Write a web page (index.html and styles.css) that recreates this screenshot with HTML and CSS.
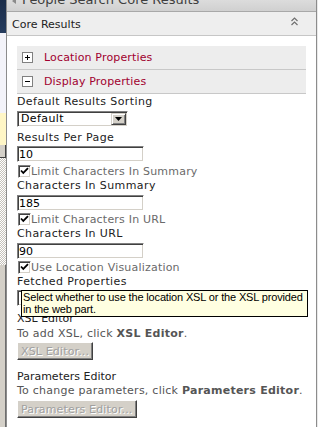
FILE: index.html
```html
<!DOCTYPE html>
<html>
<head>
<meta charset="utf-8">
<link rel="stylesheet" href="styles.css">
</head>
<body>
<div class="page">
  <div class="side">
    <div class="s-navy"></div>
    <div class="s-light"></div>
    <div class="s-yellow"></div>
    <div class="s-btn"></div>
    <div class="s-dither"></div>
    <div class="s-gray"></div>
  </div>
  <div class="panel">
    <div class="titlebar"><span class="tri"></span><span class="title">People Search Core Results</span></div>
    <div class="corehdr">
      <span class="core-t">Core Results</span>
      <svg class="chev" width="7" height="9" viewBox="0 0 7 9"><path d="M0.5 4L3.5 1L6.5 4M0.5 8L3.5 5L6.5 8" fill="none" stroke="#707070" stroke-width="1.2"/></svg>
    </div>
    <div class="content">
      <div class="sect">
        <svg class="box" width="11" height="11" viewBox="0 0 11 11" shape-rendering="crispEdges"><rect x="0.5" y="0.5" width="10" height="10" fill="#fff" stroke="#808080"/><path d="M3 5.5h5M5.5 3v5" stroke="#000"/></svg>
        <span class="sect-t">Location Properties</span>
      </div>
      <div class="sect">
        <svg class="box" width="11" height="11" viewBox="0 0 11 11" shape-rendering="crispEdges"><rect x="0.5" y="0.5" width="10" height="10" fill="#fff" stroke="#808080"/><path d="M3 5.5h5" stroke="#000"/></svg>
        <span class="sect-t">Display Properties</span>
      </div>

      <div class="lbl">Default Results Sorting</div>
      <div class="select"><span class="sel-v">Default</span><span class="sel-btn"><svg width="7" height="4" viewBox="0 0 7 4"><path d="M0 0h7L3.5 4z" fill="#000"/></svg></span></div>

      <div class="lbl lbl-gap">Results Per Page</div>
      <input class="txt" type="text" value="10">

      <div class="chk chk-a"><span class="cb"><svg width="9" height="9" viewBox="0 0 9 9"><path d="M1 3.5l2.3 2.5L8 1.2" fill="none" stroke="#000" stroke-width="1.8"/></svg></span>Limit Characters In Summary</div>
      <div class="lbl">Characters In Summary</div>
      <input class="txt txt-b" type="text" value="185">

      <div class="chk chk-b"><span class="cb"><svg width="9" height="9" viewBox="0 0 9 9"><path d="M1 3.5l2.3 2.5L8 1.2" fill="none" stroke="#000" stroke-width="1.8"/></svg></span>Limit Characters In URL</div>
      <div class="lbl">Characters In URL</div>
      <input class="txt txt-b" type="text" value="90">

      <div class="chk chk-c"><span class="cb"><svg width="9" height="9" viewBox="0 0 9 9"><path d="M1 3.5l2.3 2.5L8 1.2" fill="none" stroke="#000" stroke-width="1.8"/></svg></span>Use Location Visualization</div>
      <div class="lbl">Fetched Properties</div>
      <input class="txt" type="text" value="">

      <div class="sub sub-first">XSL Editor</div>
      <div class="desc desc-a">To add XSL, click <b>XSL Editor</b>.</div>
      <button class="btn btn-a" disabled>XSL Editor...</button>

      <div class="sub sub-second">Parameters Editor</div>
      <div class="desc">To change parameters, click <b>Parameters Editor</b>.</div>
      <button class="btn btn-b" disabled>Parameters Editor...</button>
    </div>
    <div class="tooltip">Select whether to use the location XSL or the XSL provided<br>in the web part.</div>
  </div>
  <div class="rside"></div>
</div>
</body>
</html>
```

FILE: styles.css
```css
* { box-sizing: border-box; }
html, body { margin: 0; padding: 0; }
body { background: #ffffff; font-family: "DejaVu Sans", Verdana, sans-serif; }

.page { display: flex; width: 318px; height: 427px; overflow: hidden; }

.side { width: 6px; display: flex; flex-direction: column; flex: none; }
.s-navy { height: 33px; background: linear-gradient(#1a2c49, #263c5e); }
.s-light { height: 80px; background: #f3f3f9; }
.s-yellow { height: 32px; background: #fff6c6; }
.s-btn { height: 13px; background: #d4d0c8; border-bottom: 1px solid #404040; border-right: 1px solid #404040; }
.s-dither { height: 107px; background: repeating-conic-gradient(#c6c2ba 0 25%, #ffffff 0 50%) 0 0 / 2px 2px; }
.s-gray { flex: 1; background: #d4d0c8; border-right: 1px solid #6e6e6e; }

.panel { position: relative; width: 311px; flex: none; background: #ffffff; border-left: 1px solid #8c8c8c; border-right: 1px solid #8c8c8c; }
.rside { width: 1px; flex: none; background: #e9e9e9; }

.titlebar { height: 12px; overflow: hidden; display: flex; align-items: flex-start; padding-left: 5px; background: linear-gradient(#dcdcdc, #d0d0d0); border-bottom: 1px solid #a8a8a8; }
.tri { width: 0; height: 0; margin-top: -2px; border-right: 4px solid #8a8a8a; border-top: 3px solid transparent; border-bottom: 3px solid transparent; }
.title { margin-top: -8px; margin-left: 6px; font-size: 13px; line-height: 15px; color: #3e3e3e; white-space: nowrap; }

.corehdr { height: 24px; padding: 2px 18px 0 5px; display: flex; align-items: center; justify-content: space-between; background: #eeeeee; border-bottom: 1px solid #c6c6c6; }
.core-t { font-size: 11px; color: #222222; }
.chev { display: block; align-self: flex-start; margin-top: 3px; }

.content { padding: 10px 10px 0 10px; }

.sect { height: 24px; display: flex; align-items: center; padding-left: 5px; background: #ededed; border-bottom: 1px solid #c8c8c8; }
.box { display: block; flex: none; margin-right: 11px; }
.sect-t { font-size: 11px; letter-spacing: 0.15px; color: #a1002f; }

.lbl { font-size: 11px; line-height: 15px; letter-spacing: 0.4px; color: #222222; white-space: nowrap; }
.lbl-gap { margin-top: 3px; }

.select { margin-top: 2px; width: 111px; height: 16px; display: flex; background: #ffffff; border: 1px solid; border-color: #808080 #ffffff #ffffff #808080; box-shadow: inset 1px 1px #404040, inset -1px -1px #d4d0c8; padding: 1px; }
.sel-v { flex: 1; font-size: 11px; line-height: 12px; padding-left: 2px; letter-spacing: 0.4px; color: #000000; }
.sel-btn { width: 15px; height: 12px; display: flex; align-items: center; justify-content: center; background: #d4d0c8; border: 1px solid; border-color: #d4d0c8 #404040 #404040 #d4d0c8; box-shadow: inset 1px 1px #ffffff, inset -1px -1px #808080; }
.sel-btn svg { display: block; }

.txt { display: block; margin: 1px 0 0 0; width: 127px; height: 16px; padding: 0 1px; font-family: "DejaVu Sans", Verdana, sans-serif; font-size: 11px; color: #000000; background: #ffffff; border: 1px solid; border-color: #808080 #ffffff #ffffff #808080; box-shadow: inset 1px 1px #404040, inset -1px -1px #d4d0c8; outline: none; }
.txt-b { margin-top: 2px; }

.chk { display: flex; align-items: center; height: 14px; font-size: 11px; letter-spacing: 0.2px; color: #6a6a6a; white-space: nowrap; }
.chk-a { margin-top: 2px; }
.chk-b { margin-top: 1px; }
.chk-c { margin-top: 1px; }
.cb { width: 13px; height: 13px; flex: none; margin-left: 1px; display: flex; align-items: center; justify-content: center; background: #ffffff; border: 1px solid; border-color: #808080 #ffffff #ffffff #808080; box-shadow: inset 1px 1px #404040, inset -1px -1px #d4d0c8; }
.cb svg { display: block; }

.sub { font-size: 11px; line-height: 14px; color: #222222; }
.sub-first { margin-top: 6px; }
.sub-second { margin-top: 10px; }
.desc { font-size: 11px; line-height: 14px; letter-spacing: 0.25px; color: #555555; white-space: nowrap; }
.desc b { letter-spacing: 0.25px; }
.desc-a { margin-top: 1px; }

.btn { display: block; height: 18px; padding: 0 3px; margin: 1px 0 0 0; font-family: "DejaVu Sans", Verdana, sans-serif; font-size: 11px; letter-spacing: 0.15px; color: #a0a0a0; text-shadow: 1px 1px #ffffff; background: #d4d0c8; border: 1px solid; border-color: #ffffff #404040 #404040 #ffffff; box-shadow: inset -1px -1px #808080; }
.btn-b { margin-top: 2px; }

.tooltip { position: absolute; left: 14px; top: 290px; width: 287px; padding: 0 1px 1px 1px; font-family: "Liberation Sans", Arial, sans-serif; font-size: 11px; line-height: 12px; letter-spacing: -0.15px; color: #000000; background: #ffffe1; border: 1px solid #000000; white-space: nowrap; }
```
